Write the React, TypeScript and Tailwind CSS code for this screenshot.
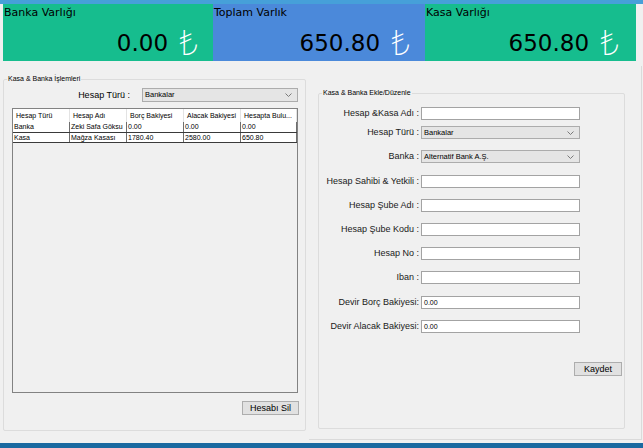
import React from "react";

function Chevron() {
  return (
    <svg width="7" height="4" viewBox="0 0 7 4" className="shrink-0">
      <polyline points="0.5,0.5 3.5,3.5 6.5,0.5" fill="none" stroke="#7a7a7a" strokeWidth="1" />
    </svg>
  );
}

function Combo({ text, className }: { text: string; className: string }) {
  return (
    <div
      className={`flex items-center justify-between border border-[#acacac] bg-[#e5e5e5] pl-[2px] pr-[5px] text-[7.5px] leading-none text-black ${className}`}
    >
      <span>{text}</span>
      <Chevron />
    </div>
  );
}

function Card({
  title,
  value,
  cls,
}: {
  title: string;
  value: string;
  cls: string;
}) {
  return (
    <div className={`h-[57px] flex flex-col ${cls}`}>
      <div className="h-[26px] pl-[1px] pt-[2px] text-[11px] leading-[13px] font-['DejaVu_Sans',sans-serif] text-black">
        {title}
      </div>
      <div className="flex items-center justify-end h-[26px] gap-[11px]">
        <span className="text-[23px] leading-[26px] font-['DejaVu_Sans',sans-serif] text-black">{value}</span>
        <span className="mb-[3px] text-[35px] leading-[26px] font-['Noto_Sans','DejaVu_Sans',sans-serif] font-extralight text-white">₺</span>
      </div>
    </div>
  );
}

const rows = [
  ["Banka", "Zeki Safa Göksu", "0.00", "0.00", "0.00"],
  ["Kasa", "Mağza Kasası", "1780.40", "2580.00", "650.80"],
];

const headers = ["Hesap Türü", "Hesap Adı", "Borç Bakiyesi", "Alacak Bakiyesi", "Hesapta Bulu..."];
const colW = ["w-[57px]", "w-[57px]", "w-[57px]", "w-[57px]", "w-[56px]"];

type Field = { label: string; kind: "input" | "combo"; value?: string; mt: string };
const fields: Field[] = [
  { label: "Hesap &Kasa Adı :", kind: "input", mt: "mt-[9px]" },
  { label: "Hesap Türü :", kind: "combo", value: "Bankalar", mt: "mt-[6px]" },
  { label: "Banka :", kind: "combo", value: "Alternatif Bank A.Ş.", mt: "mt-[11px]" },
  { label: "Hesap Sahibi & Yetkili :", kind: "input", mt: "mt-[12px]" },
  { label: "Hesap Şube Adı :", kind: "input", mt: "mt-[11px]" },
  { label: "Hesap Şube Kodu :", kind: "input", mt: "mt-[11px]" },
  { label: "Hesap No :", kind: "input", mt: "mt-[11px]" },
  { label: "Iban :", kind: "input", mt: "mt-[11px]" },
  { label: "Devir Borç Bakiyesi:", kind: "input", value: "0.00", mt: "mt-[12px]" },
  { label: "Devir Alacak Bakiyesi:", kind: "input", value: "0.00", mt: "mt-[11px]" },
];

export default function App() {
  return (
    <div className="w-[643px] h-[448px] overflow-hidden bg-[#f0f0f0] flex flex-col font-['Liberation_Sans',Arial,sans-serif] text-black">
      <div className="h-[4px] bg-[#46a0d9]" />
      <div className="flex pl-[3px]">
        <Card title="Banka Varlığı" value="0.00" cls="w-[210px] bg-[#16bd8e] pr-[14px]" />
        <Card title="Toplam Varlık" value="650.80" cls="w-[212px] bg-[#4b89da] pr-[14px]" />
        <Card title="Kasa Varlığı" value="650.80" cls="w-[211px] bg-[#16bd8e] pr-[16px]" />
      </div>

      <div className="h-[382px] flex items-start">
        {/* Left group */}
        <fieldset className="ml-[3px] mt-[13px] w-[303px] h-[357px] border border-[#dcdcdc] rounded-[2px] flex flex-col">
          <legend className="ml-[3px] px-[1px] text-[7px] leading-[10px]">Kasa &amp; Banka İşlemleri</legend>
          <div className="mt-[4px] flex items-center h-[14px]">
            <div className="w-[138px] pr-[12px] text-right text-[9px] leading-none whitespace-nowrap">Hesap Türü :</div>
            <Combo text="Bankalar" className="w-[156px] h-[14px]" />
          </div>
          <div className="ml-[8px] mt-[6px] w-[286px] h-[285px] border border-[#828282] bg-[#f0f0f0] flex flex-col">
            <div className="flex h-[13px] bg-white">
              {headers.map((h, i) => (
                <div
                  key={h}
                  className={`${colW[i]} h-full border-r border-[#e3e3e3] pl-[3px] text-[7px] leading-[13px] whitespace-nowrap overflow-hidden`}
                >
                  {h}
                </div>
              ))}
            </div>
            {rows.map((r, ri) => (
              <div
                key={ri}
                className={
                  ri === 0
                    ? "flex h-[10px] bg-white"
                    : "flex h-[11px] bg-white border-y border-[#3a3a3a]"
                }
              >
                {r.map((c, ci) => (
                  <div
                    key={ci}
                    className={`${colW[ci]} h-full border-r border-[#6e6e6e] pl-[1px] text-[7px] leading-[9px] whitespace-nowrap overflow-hidden`}
                  >
                    {c}
                  </div>
                ))}
              </div>
            ))}
          </div>
          <div className="flex justify-end mt-[8px] pr-[6px]">
            <button className="w-[57px] h-[14px] border border-[#adadad] bg-[#e1e1e1] text-[9px] leading-none">
              Hesabı Sil
            </button>
          </div>
        </fieldset>

        {/* Right area */}
        <div className="ml-[3px] mt-[5px] w-[333px] h-[374px] border-r border-b border-[#dadada]">
          <fieldset className="ml-[9px] mt-[22px] w-[307px] h-[341px] border border-[#dcdcdc] rounded-[2px] flex flex-col">
            <legend className="ml-[3px] px-[1px] text-[7px] leading-[10px]">Kasa &amp; Banka Ekle/Düzenle</legend>
            {fields.map((f) => (
              <div key={f.label} className={`flex items-center h-[13px] ${f.mt}`}>
                <div className="w-[100px] text-right text-[9px] leading-none whitespace-nowrap text-[#1a1a1a]">
                  {f.label}
                </div>
                {f.kind === "input" ? (
                  <div className="ml-[2px] w-[159px] h-[13px] border border-[#a3a3a3] bg-white pl-[2px] text-[7px] leading-[11px]">
                    {f.value ?? ""}
                  </div>
                ) : (
                  <Combo text={f.value ?? ""} className="ml-[2px] w-[159px] h-[13px]" />
                )}
              </div>
            ))}
            <div className="flex justify-end mt-[29px] pr-[2px]">
              <button className="w-[48px] h-[14px] border border-[#adadad] bg-[#e1e1e1] text-[9px] leading-none">
                Kaydet
              </button>
            </div>
          </fieldset>
        </div>
      </div>

      <div className="h-[5px] bg-[#1a69a0]" />
    </div>
  );
}
